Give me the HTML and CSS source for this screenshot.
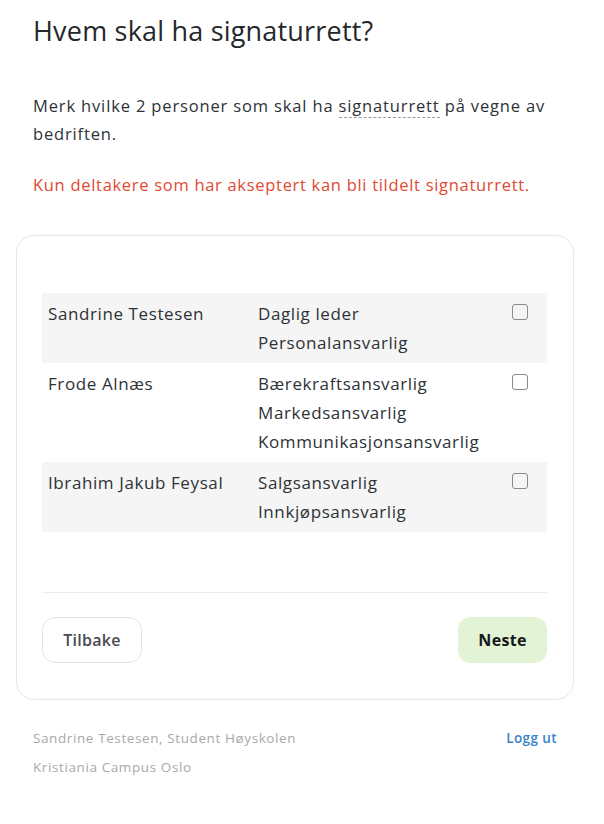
FILE: index.html
```html
<!DOCTYPE html>
<html lang="no">
<head>
<meta charset="utf-8">
<title>Hvem skal ha signaturrett?</title>
<link rel="stylesheet" href="styles.css">
</head>
<body>
<main class="page">
  <header class="intro">
    <h1 class="title">Hvem skal ha signaturrett?</h1>
    <p class="lead"><span>Merk hvilke 2 personer som skal ha</span> <span class="term">signaturrett</span> <span>på vegne av</span> <span>bedriften.</span></p>
    <p class="warning">Kun deltakere som har akseptert kan bli tildelt signaturrett.</p>
  </header>

  <section class="card">
    <table class="people">
      <tbody>
        <tr class="row shaded">
          <td class="name">Sandrine Testesen</td>
          <td class="roles"><div>Daglig leder</div><div>Personalansvarlig</div></td>
          <td class="check"><span class="box"></span></td>
        </tr>
        <tr class="row">
          <td class="name">Frode Alnæs</td>
          <td class="roles"><div>Bærekraftsansvarlig</div><div>Markedsansvarlig</div><div>Kommunikasjonsansvarlig</div></td>
          <td class="check"><span class="box"></span></td>
        </tr>
        <tr class="row shaded">
          <td class="name">Ibrahim Jakub Feysal</td>
          <td class="roles"><div>Salgsansvarlig</div><div>Innkjøpsansvarlig</div></td>
          <td class="check"><span class="box"></span></td>
        </tr>
      </tbody>
    </table>
    <div class="actions">
      <button class="btn btn-back">Tilbake</button>
      <button class="btn btn-next">Neste</button>
    </div>
  </section>

  <footer class="footer">
    <div class="who">
      <div>Sandrine Testesen, Student Høyskolen</div>
      <div>Kristiania Campus Oslo</div>
    </div>
    <a class="logout" href="#">Logg ut</a>
  </footer>
</main>
</body>
</html>
```

FILE: styles.css
```css
* { box-sizing: border-box; }
html, body { margin: 0; padding: 0; background: #fff; }
body {
  font-family: "Open Sans", "Liberation Sans", sans-serif;
  color: #2b2f33;
}
.page {
  width: 604px;
  padding: 0 30px 0 16px;
}
.intro { padding: 0 0 0 17px; }
.title {
  margin: 0;
  padding-top: 14px;
  font-size: 27px;
  line-height: 34px;
  font-weight: 400;
  letter-spacing: 0.2px;
  color: #25282b;
}
.lead {
  margin: 44px 0 0;
  font-size: 16.5px;
  line-height: 28px;
  letter-spacing: 0.85px;
  color: #2d3237;
}
.term {
  border-bottom: 1px dashed #9a9a9a;
}
.warning {
  margin: 23px 0 0;
  font-size: 16.5px;
  line-height: 28px;
  letter-spacing: 0.7px;
  color: #df4a30;
}
.card {
  margin-top: 36px;
  border: 1px solid #e6e6e6;
  border-radius: 18px;
  padding: 57px 26px 36px 25px;
}
.people {
  width: 100%;
  border-collapse: collapse;
  font-size: 17px;
  line-height: 29px;
  letter-spacing: 0.6px;
  color: #2d3237;
}
.row td { vertical-align: top; padding: 6px; }
.row.shaded { background: #f5f5f5; }
.name { width: 210px; }
.check { width: 40px; text-align: right; }
.box {
  display: inline-block;
  width: 16px;
  height: 16px;
  border: 1.5px solid #8a8a8a;
  border-radius: 3px;
  margin: 5px 13px 0 0;
  vertical-align: top;
}
.actions {
  margin-top: 60px;
  border-top: 1px solid #ececec;
  padding-top: 24px;
  display: flex;
  justify-content: space-between;
}
.btn {
  font-family: inherit;
  font-size: 16px;
  font-weight: 600;
  letter-spacing: 0.3px;
  height: 46px;
  border-radius: 13px;
  cursor: pointer;
}
.btn-back {
  width: 100px;
  background: #fff;
  border: 1px solid #e4e4e4;
  color: #4a4a4f;
}
.btn-next {
  width: 89px;
  background: #e2f3d6;
  border: none;
  color: #15181a;
  font-weight: 700;
}
.footer {
  display: flex;
  justify-content: space-between;
  padding: 24px 17px 0 17px;
  font-size: 13.5px;
  line-height: 29px;
  letter-spacing: 0.6px;
}
.who { color: #a9a9a9; }
.logout {
  color: #3b82c9;
  text-decoration: none;
  font-weight: 600;
  letter-spacing: 0.4px;
}
```
